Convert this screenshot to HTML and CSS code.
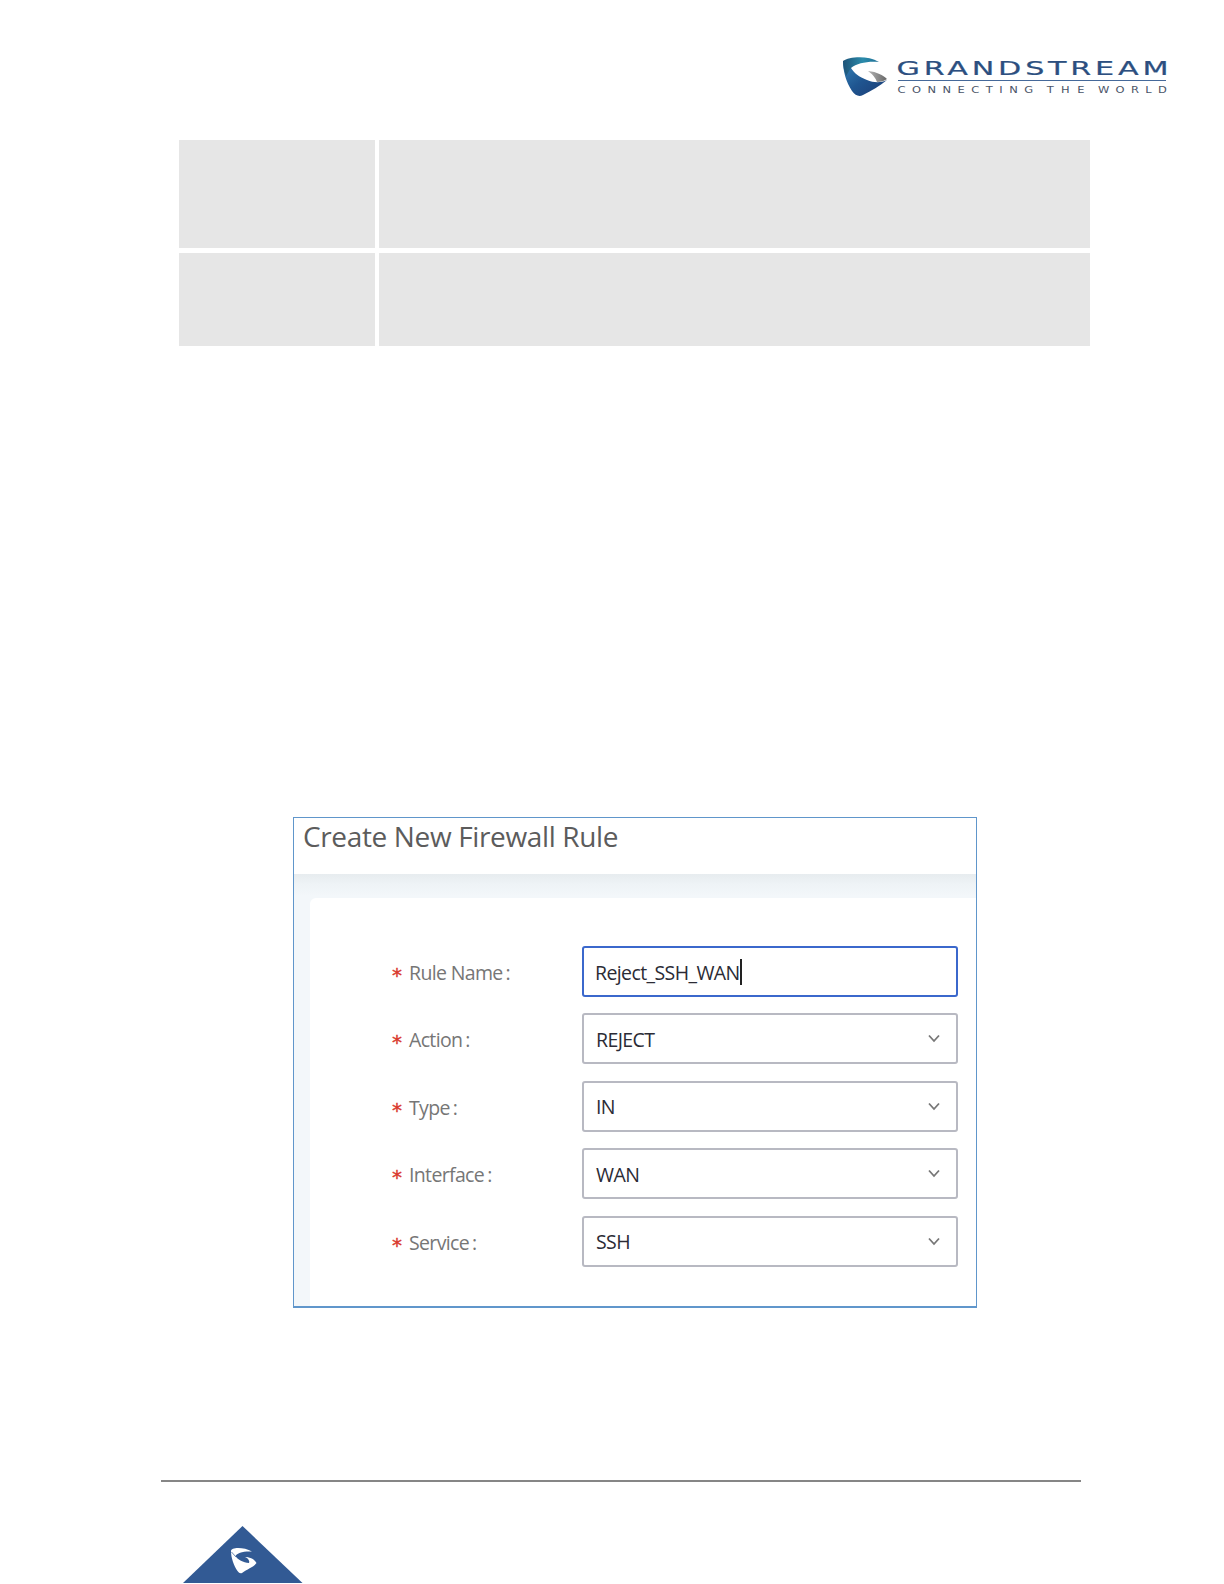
FILE: index.html
```html
<!DOCTYPE html>
<html lang="en">
<head>
<meta charset="UTF-8">
<title>Create New Firewall Rule</title>
<link rel="stylesheet" href="styles.css">
</head>
<body>
    <div class="page">
        <header class="header">
            <svg class="logo" width="326" height="44" viewBox="0 0 326 44">
                <defs>
                    <linearGradient id="swoosh" x1="0" y1="0" x2="1" y2="0">
                        <stop offset="0" stop-color="#1d5277"/>
                        <stop offset="0.55" stop-color="#2b8bab"/>
                        <stop offset="1" stop-color="#1f6f95"/>
                    </linearGradient>
                    <linearGradient id="shield" x1="0" y1="0" x2="1" y2="1">
                        <stop offset="0" stop-color="#3583b8"/>
                        <stop offset="0.5" stop-color="#1f5590"/>
                        <stop offset="1" stop-color="#1c3c74"/>
                    </linearGradient>
                    <linearGradient id="tip" x1="0" y1="0" x2="1" y2="0">
                        <stop offset="0" stop-color="#b5b5b5"/>
                        <stop offset="1" stop-color="#666666"/>
                    </linearGradient>
                </defs>
                <path fill="url(#shield)" d="M0 4C0 14 3 25 9 34Q14 41 20 38C28 34 37 29 44 23C38 26 31 26 24 23C16 20 11 16 8 11Z"/>
                <path fill="url(#swoosh)" d="M0 4C6 0 24-2 36 5C25 4 14 6 8 11C6 14 5 16 3 19C1 13 0 9 0 4Z"/>
                <path fill="url(#tip)" d="M25 14C34 15 40 18 44 22Q40 25 34 25Q32 19 25 14Z"/>
                <g class="brand" transform="translate(53.5 18) scale(1.55 1)">
                    <text x="0" y="0" textLength="175.5">GRANDSTREAM</text>
                </g>
                <rect x="55" y="23" width="268" height="1" fill="#45699a"/>
                <g class="tagline" transform="translate(54.5 35.5) scale(1.35 1)">
                    <text x="0" y="0" textLength="100.5">CONNECTING</text>
                    <text x="110.5" y="0" textLength="28">THE</text>
                    <text x="148.5" y="0" textLength="51">WORLD</text>
                </g>
            </svg>
        </header>

        <div class="table">
            <div class="cell"></div>
            <div class="cell"></div>
            <div class="cell"></div>
            <div class="cell"></div>
        </div>

        <div class="panel">
            <h1 class="panel-title">Create New Firewall Rule</h1>
            <div class="panel-body">
                <form class="card">
                    <div class="row">
                        <span class="star">*</span>
                        <span class="label">Rule Name<i>:</i></span>
                        <div class="field active"><span class="value">Reject_SSH_WAN</span><span class="caret"></span></div>
                    </div>
                    <div class="row">
                        <span class="star">*</span>
                        <span class="label">Action<i>:</i></span>
                        <div class="field"><span class="value">REJECT</span><svg class="arrow" width="12" height="9" viewBox="0 0 12 9"><path d="M1 1.5L6 7L11 1.5"/></svg></div>
                    </div>
                    <div class="row">
                        <span class="star">*</span>
                        <span class="label">Type<i>:</i></span>
                        <div class="field"><span class="value">IN</span><svg class="arrow" width="12" height="9" viewBox="0 0 12 9"><path d="M1 1.5L6 7L11 1.5"/></svg></div>
                    </div>
                    <div class="row">
                        <span class="star">*</span>
                        <span class="label">Interface<i>:</i></span>
                        <div class="field"><span class="value">WAN</span><svg class="arrow" width="12" height="9" viewBox="0 0 12 9"><path d="M1 1.5L6 7L11 1.5"/></svg></div>
                    </div>
                    <div class="row">
                        <span class="star">*</span>
                        <span class="label">Service<i>:</i></span>
                        <div class="field"><span class="value">SSH</span><svg class="arrow" width="12" height="9" viewBox="0 0 12 9"><path d="M1 1.5L6 7L11 1.5"/></svg></div>
                    </div>
                </form>
            </div>
        </div>

        <footer class="footer">
            <svg class="corner" width="120" height="57" viewBox="0 0 120 57">
                <path fill="#325a94" d="M59.5 0L119.5 57H0Z"/>
                <path fill="#fff" d="M48 25C48 21 61 21 69 25.5C60 25 54 27 52.5 30C55 34 60 36.5 66 37C67 35 65 32 62 31C68 31 72 34 73.5 37C71 41 64 43 59 47Q56.5 48 54.5 45C51 40 48 32 48 25Z"/>
                <path fill="none" stroke="#325a94" stroke-width="0.7" d="M48.5 26L53 31"/>
            </svg>
        </footer>
    </div>
</body>
</html>
```

FILE: styles.css
```css
* {
margin: 0;
padding: 0;
box-sizing: border-box;
}

body {
background-color: #fff;
font-family: "Open Sans", "Noto Sans", sans-serif;
}

.page {
display: flex;
flex-direction: column;
width: 1224px;
height: 1584px;
overflow: hidden;
}

.header {
display: flex;
justify-content: flex-end;
height: 140px;
padding: 57px 55px 0 0;
}

.logo {
overflow: visible;
}

.brand {
font-family: "DejaVu Sans", sans-serif;
font-size: 19.5px;
fill: #2c4f80;
stroke: #2c4f80;
stroke-width: 0.2px;
}

.tagline {
font-family: "DejaVu Sans", sans-serif;
font-size: 8.5px;
fill: #4a5468;
}

.table {
display: grid;
grid-template-columns: 196px 711px;
grid-template-rows: 108px 93px;
gap: 5px 4px;
margin-left: 179px;
}

.cell {
background-color: #e6e6e6;
}

.panel {
display: flex;
flex-direction: column;
width: 684px;
height: 491px;
margin: 471px 0 0 293px;
border: 1px solid #6096cb;
border-bottom-width: 2px;
}

.panel-title {
height: 56px;
padding-left: 9px;
line-height: 36px;
font-size: 28px;
font-weight: 400;
letter-spacing: -0.36px;
color: #5c5c5c;
}

.panel-body {
flex: 1;
padding: 24px 0 0 16px;
background: linear-gradient(#e7ecef, #eef3f6 10px, #f3f7fa 22px);
}

.card {
display: flex;
flex-direction: column;
gap: 16.4px;
height: 100%;
padding: 48px 18px 0 82px;
border-top-left-radius: 6px;
background-color: #fff;
}

.row {
display: flex;
align-items: center;
height: 51px;
}

.star {
width: 16px;
padding-top: 7px;
font-family: "DejaVu Sans", sans-serif;
font-size: 20px;
line-height: 20px;
color: #d9372c;
-webkit-text-stroke: 0.4px #d9372c;
}

.label {
flex: 1;
padding-left: 1px;
padding-top: 2px;
font-size: 19.5px;
letter-spacing: -0.65px;
color: #767676;
}

.label i {
margin-left: 3px;
font-style: normal;
}

.field {
display: flex;
align-items: center;
width: 376px;
height: 51px;
padding: 0 16px 0 12px;
border: 2px solid #b8b9c2;
border-radius: 3px;
}

.field.active {
padding-left: 11px;
border-color: #3b68cc;
}

.value {
padding-top: 1px;
font-size: 19.5px;
letter-spacing: -0.6px;
color: #2b2b35;
}

.caret {
width: 2px;
height: 26px;
background-color: #222;
}

.arrow {
margin-left: auto;
fill: none;
stroke: #777;
stroke-width: 1.8;
}

.footer {
width: 920px;
height: 103px;
margin: 172px 0 0 161px;
border-top: 2px solid #868686;
padding: 44px 0 0 22px;
}

.corner {
display: block;
}
```
